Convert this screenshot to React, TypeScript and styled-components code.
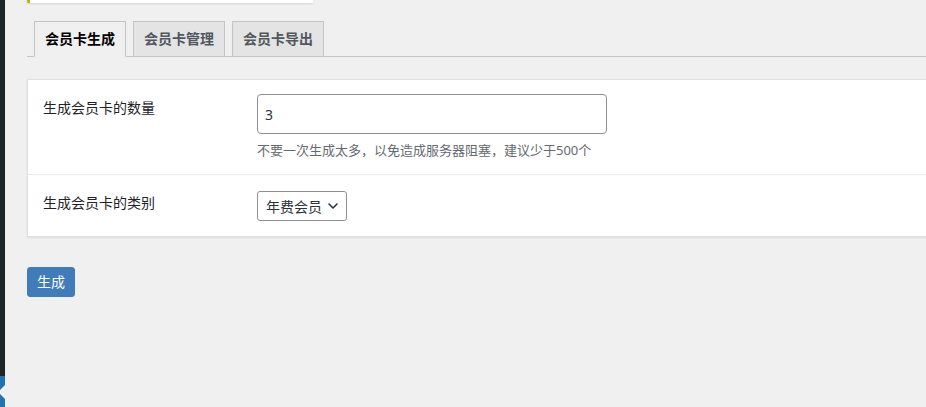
import styled, { createGlobalStyle } from 'styled-components';

const GlobalStyle = createGlobalStyle`
	html, body {
		margin: 0;
		padding: 0;
		background: #f0f0f1;
		font-family: "Noto Sans", "Noto Sans CJK SC", sans-serif;
		color: #1d2327;
		font-size: 14px;
	}
	* {
		box-sizing: border-box;
	}
`;

const Page = styled.div`
	display: flex;
	height: 407px;
	overflow: hidden;
`;

const Sidebar = styled.div`
	position: relative;
	flex: 0 0 5px;
	display: flex;
	flex-direction: column;
	background: #1d2327;
`;

const SidebarSpacer = styled.div`
	flex: 1;
`;

const CurrentItem = styled.div`
	position: relative;
	height: 31px;
	background: #2271b1;
	&::after {
		content: '';
		position: absolute;
		right: 0;
		top: 9px;
		border: 7px solid transparent;
		border-right: 7px solid #f0f0f1;
		border-left-width: 0;
	}
`;

const Content = styled.div`
	flex: 1;
	min-width: 0;
	padding-left: 22px;
`;

const Notice = styled.div`
	width: 286px;
	height: 3px;
	background: #fff;
	border-left: 3px solid #dba617;
	box-shadow: 0 1px 2px rgba(0, 0, 0, 0.12);
`;

const TabBar = styled.nav`
	display: flex;
	align-items: flex-end;
	margin-top: 18px;
	border-bottom: 1px solid #c3c4c7;
`;

const Tab = styled.a<{ $active?: boolean }>`
	margin-left: 7px;
	margin-bottom: -1px;
	padding: 5px 10px;
	border: 1px solid #c3c4c7;
	border-bottom: 1px solid ${props => (props.$active ? '#f0f0f1' : '#c3c4c7')};
	background: ${props => (props.$active ? '#f0f0f1' : '#e4e4e5')};
	color: ${props => (props.$active ? '#000' : '#50575e')};
	font-size: 14px;
	font-weight: 700;
	line-height: 24px;
	text-decoration: none;
	white-space: nowrap;
`;

const FormBox = styled.div`
	margin-top: 22px;
	margin-right: -2px;
	background: #fff;
	border: 1px solid #e0e0e0;
	box-shadow: 0 1px 2px rgba(0, 0, 0, 0.08);
`;

const Row = styled.div<{ $last?: boolean }>`
	display: grid;
	grid-template-columns: 229px 1fr;
	border-bottom: ${props => (props.$last ? 'none' : '1px solid #ececed')};
`;

const Label = styled.div`
	padding: 20px 0 0 15px;
	font-size: 14px;
	line-height: 16px;
	color: #1d2327;
`;

const Field = styled.div`
	padding: 14px 0 15px;
`;

const TextInput = styled.div`
	width: 350px;
	height: 40px;
	display: flex;
	align-items: center;
	padding: 0 7px;
	border: 1px solid #8c8f94;
	border-radius: 4px;
	font-size: 14px;
	color: #2c3338;
`;

const Hint = styled.p`
	margin: 7px 0 0;
	font-size: 13px;
	line-height: 18px;
	color: #646970;
`;

const Select = styled.div`
	width: 90px;
	height: 30px;
	margin-top: 2px;
	display: flex;
	align-items: center;
	justify-content: space-between;
	padding: 0 7px 0 8px;
	border: 1px solid #8c8f94;
	border-radius: 3px;
	font-size: 14px;
	color: #2c3338;
	background: #fff;
`;

const Button = styled.button`
	margin-top: 30px;
	height: 30px;
	padding: 0 9px;
	border: 1px solid #407cba;
	border-radius: 3px;
	background: #407cba;
	color: #fff;
	font-family: inherit;
	font-size: 14px;
	line-height: 28px;
`;

function Chevron() {
	return (
		<svg width="12" height="12" viewBox="0 0 12 12" fill="none">
			<path d="M2 4l4 4 4-4" stroke="#2c3338" strokeWidth="1.6" strokeLinecap="round" strokeLinejoin="round" />
		</svg>
	);
}

function App() {
	return (
		<>
			<GlobalStyle />
			<Page>
				<Sidebar>
					<SidebarSpacer />
					<CurrentItem />
				</Sidebar>
				<Content>
					<Notice />
					<TabBar>
						<Tab $active>会员卡生成</Tab>
						<Tab>会员卡管理</Tab>
						<Tab>会员卡导出</Tab>
					</TabBar>
					<FormBox>
						<Row>
							<Label>生成会员卡的数量</Label>
							<Field>
								<TextInput>3</TextInput>
								<Hint>不要一次生成太多，以免造成服务器阻塞，建议少于500个</Hint>
							</Field>
						</Row>
						<Row $last>
							<Label>生成会员卡的类别</Label>
							<Field>
								<Select>
									年费会员
									<Chevron />
								</Select>
							</Field>
						</Row>
					</FormBox>
					<Button>生成</Button>
				</Content>
			</Page>
		</>
	);
}

export default App;
